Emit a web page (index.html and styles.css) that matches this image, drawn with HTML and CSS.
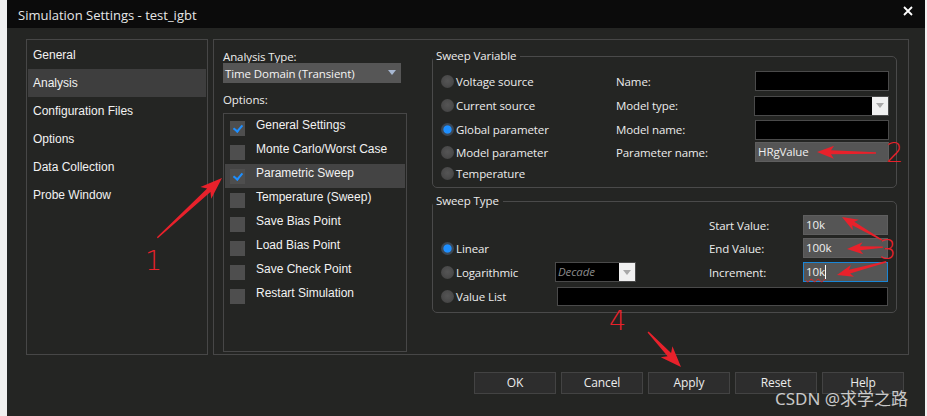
FILE: index.html
```html
<!DOCTYPE html>
<html>
<head>
<meta charset="utf-8">
<link rel="stylesheet" href="styles.css">
</head>
<body>
<div class="window">
  <div class="titlebar">
    <span class="title">Simulation Settings - test_igbt</span>
    <svg class="close" width="10" height="10" viewBox="0 0 10 10"><path d="M1 1L9 9M9 1L1 9" stroke="#fff" stroke-width="1.8"/></svg>
  </div>
  <div class="content">
    <div class="nav">
      <div class="nav-item">General</div>
      <div class="nav-item selected">Analysis</div>
      <div class="nav-item">Configuration Files</div>
      <div class="nav-item">Options</div>
      <div class="nav-item">Data Collection</div>
      <div class="nav-item">Probe Window</div>
    </div>
    <div class="main">
      <div class="left-col">
        <div class="lbl">Analysis Type:</div>
        <div class="combo-analysis"><span>Time Domain (Transient)</span><span class="tri blue"></span></div>
        <div class="lbl options-lbl">Options:</div>
        <div class="optlist">
          <div class="opt"><span class="cb checked"></span><span>General Settings</span></div>
          <div class="opt"><span class="cb"></span><span>Monte Carlo/Worst Case</span></div>
          <div class="opt hl"><span class="cb checked"></span><span>Parametric Sweep</span></div>
          <div class="opt"><span class="cb"></span><span>Temperature (Sweep)</span></div>
          <div class="opt"><span class="cb"></span><span>Save Bias Point</span></div>
          <div class="opt"><span class="cb"></span><span>Load Bias Point</span></div>
          <div class="opt"><span class="cb"></span><span>Save Check Point</span></div>
          <div class="opt"><span class="cb"></span><span>Restart Simulation</span></div>
        </div>
      </div>
      <div class="right-col">
        <fieldset class="group">
          <legend>Sweep Variable</legend>
          <div class="sv-grid">
            <div class="radio-row"><span class="radio"></span>Voltage source</div>
            <div class="flbl">Name:</div>
            <div class="field black"></div>

            <div class="radio-row"><span class="radio"></span>Current source</div>
            <div class="flbl">Model type:</div>
            <div class="field black combo"><span class="combo-btn"><span class="tri gray"></span></span></div>

            <div class="radio-row"><span class="radio on"></span>Global parameter</div>
            <div class="flbl">Model name:</div>
            <div class="field black"></div>

            <div class="radio-row"><span class="radio"></span>Model parameter</div>
            <div class="flbl">Parameter name:</div>
            <div class="field gray">HRgValue</div>

            <div class="radio-row"><span class="radio"></span>Temperature</div>
          </div>
        </fieldset>
        <fieldset class="group">
          <legend>Sweep Type</legend>
          <div class="st-grid">
            <div class="flbl st-start-l">Start Value:</div>
            <div class="field gray st-start">10k</div>

            <div class="radio-row st-lin"><span class="radio on"></span>Linear</div>
            <div class="flbl st-end-l">End Value:</div>
            <div class="field gray st-end">100k</div>

            <div class="radio-row st-log"><span class="radio"></span>Logarithmic</div>
            <div class="field black combo decade"><span class="decade-text">Decade</span><span class="combo-btn"><span class="tri gray"></span></span></div>
            <div class="flbl st-inc-l">Increment:</div>
            <div class="field gray focus st-inc"><span class="spell">10k</span><span class="caret"></span></div>

            <div class="radio-row st-vl"><span class="radio"></span>Value List</div>
            <div class="field black st-vlist"></div>
          </div>
        </fieldset>
      </div>
    </div>
  </div>
  <div class="buttons">
    <div class="btn">OK</div>
    <div class="btn">Cancel</div>
    <div class="btn">Apply</div>
    <div class="btn">Reset</div>
    <div class="btn">Help</div>
  </div>
</div>
<div class="watermark">CSDN @求学之路</div>
<svg class="annot" width="927" height="416" viewBox="0 0 927 416">
  <g fill="#e8212b">
    <g transform="translate(222,178) rotate(-42.7)"><polygon points="0,0 -22,-8 -18,-2.4 -88,-0.7 -88,0.7 -18,2.4 -22,8"/></g>
    <g transform="translate(817,152) rotate(181)"><polygon points="0,0 -17,-6.5 -14,-2 -59,-0.8 -59,0.8 -14,2 -17,6.5"/></g>
    <g transform="translate(842,217) rotate(-150)"><polygon points="0,0 -16,-6 -13,-2 -46,-0.7 -46,0.7 -13,2 -16,6"/></g>
    <g transform="translate(847,249) rotate(177)"><polygon points="0,0 -16,-6 -13,-2 -36,-0.7 -36,0.7 -13,2 -16,6"/></g>
    <g transform="translate(837,275) rotate(165)"><polygon points="0,0 -16,-6 -13,-2 -51,-0.7 -51,0.7 -13,2 -16,6"/></g>
    <g transform="translate(681,367) rotate(46.7)"><polygon points="0,0 -21,-8 -17,-2.4 -48,-0.7 -48,0.7 -17,2.4 -21,8"/></g>
  </g>
  <g class="num" fill="#e8212b">
    <text x="145" y="270">1</text>
    <text x="886" y="162">2</text>
    <text x="879" y="259">3</text>
    <text x="609" y="330">4</text>
  </g>
</svg>
</body>
</html>
```

FILE: styles.css
```css
* { box-sizing: border-box; }
html, body { margin: 0; padding: 0; }
body {
  background: #f0f0f0;
  width: 927px;
  height: 416px;
  overflow: hidden;
  position: relative;
  font-family: "Open Sans", "Liberation Sans", sans-serif;
  font-size: 11.5px;
  letter-spacing: -0.1px;
  color: #ececec;
}
.window {
  margin-left: 7px;
  width: 918px;
  height: 416px;
  background: #242523;
  display: flex;
  flex-direction: column;
}
.titlebar {
  height: 28px;
  background: #0b0b0b;
  display: flex;
  align-items: center;
  justify-content: space-between;
  padding: 2px 12px 0 11px;
  flex: none;
}
.titlebar .title { font-size: 13px; color: #e6e6e6; letter-spacing: 0; }
.titlebar .close { margin-top: -8px; }
.content {
  display: flex;
  gap: 5px;
  padding: 11px 0 0 19px;
  flex: none;
}
.nav {
  width: 182px;
  height: 316px;
  border: 1px solid #474747;
  padding: 1px 1px 0 1px;
  font-family: "Liberation Sans", Arial, sans-serif;
  font-size: 12px;
  letter-spacing: 0;
  color: #f2f2f2;
}
.nav-item {
  height: 28px;
  line-height: 28px;
  padding-left: 5px;
}
.nav-item.selected { background: #3e3e3e; }
.main {
  width: 696px;
  height: 316px;
  border: 1px solid #474747;
  display: flex;
  padding: 10px 11px 0 9px;
  gap: 25px;
}
.left-col { width: 184px; display: flex; flex-direction: column; }
.lbl { line-height: 13px; height: 13px; }
.combo-analysis {
  height: 20px;
  width: 178px;
  background: #565656;
  display: flex;
  align-items: center;
  justify-content: space-between;
  padding: 0 5px 0 2px;
  color: #f4f4f4;
}
.tri {
  width: 0; height: 0;
  border-left: 4px solid transparent;
  border-right: 4px solid transparent;
  border-top: 5px solid #a0a0a0;
}
.tri.blue { border-top-color: #a8b8d2; margin-top: -2px; }
.options-lbl { margin-top: 10px; height: 20px; line-height: 14px; }
.optlist {
  height: 239px;
  border: 1px solid #474747;
  padding: 2px 1px 0 1px;
  font-family: "Liberation Sans", Arial, sans-serif;
  font-size: 12px;
  letter-spacing: 0;
  color: #f2f2f2;
}
.opt {
  height: 24px;
  display: flex;
  align-items: flex-start;
  padding-left: 5px;
  gap: 11px;
}
.opt span:last-child { line-height: 18px; }
.opt.hl { background: #444444; }
.cb {
  width: 15px; height: 15px;
  margin-top: 5px;
  background: #4e4e4e;
  position: relative;
  flex: none;
}
.cb.checked::after {
  content: "";
  position: absolute;
  left: 5px; top: 2px;
  width: 4px; height: 7px;
  border-right: 2px solid #1e8fff;
  border-bottom: 2px solid #1e8fff;
  transform: rotate(40deg);
}
.right-col { width: 465px; display: flex; flex-direction: column; gap: 6px; margin-top: -1px; }
.group {
  margin: 0;
  padding: 0 0 4px 0;
  border: 1px solid #4a4a4a;
  border-radius: 5px;
  min-width: 0;
}
.group legend {
  padding: 0 4px 0 3px;
  margin-left: 0;
  line-height: 14px;
  color: #ececec;
}
.sv-grid {
  display: grid;
  grid-template-columns: 175px 139px 134px;
  grid-template-rows: 24px 25px 23px 22px 20px;
  margin-top: 6px;
  padding-left: 8px;
  align-items: center;
}
.radio-row { display: flex; align-items: center; gap: 2px; white-space: nowrap; }
.radio {
  width: 13px; height: 13px;
  border-radius: 50%;
  background: radial-gradient(circle at 50% 45%, #555 0, #4a4a4a 55%, #3c3c3c 100%);
  flex: none;
}
.radio.on {
  background: radial-gradient(circle, #1e8fff 0, #1e8fff 3.6px, #3a4a5c 4.6px, #3e3e3e 100%);
}
.flbl { white-space: nowrap; }
.field {
  height: 20px;
  border: 1px solid #4a4a4a;
  padding: 0 2px;
  line-height: 18px;
  color: #f0f0f0;
}
.field.black { background: #000; }
.field.gray { background: #555555; border-color: #5e5e5e; }
.field.focus { border-color: #1a86d6; }
.combo { display: flex; justify-content: space-between; padding: 0; }
.combo-btn {
  width: 16px;
  height: 100%;
  margin-left: auto;
  background: #f0f0f0;
  display: flex;
  align-items: center;
  justify-content: center;
}
.tri.gray { border-top-color: #a8a8a8; }
.sv-grid .combo { margin-left: -1px; }
.st-grid {
  display: grid;
  grid-template-columns: 114px 154px 94px 85px;
  grid-template-rows: 22px 24px 24px 24px;
  margin-top: 6px;
  padding-left: 8px;
  align-items: center;
}
.st-start-l { grid-column: 3; grid-row: 1; }
.st-start { grid-column: 4; grid-row: 1; }
.st-lin { grid-column: 1; grid-row: 2; }
.st-end-l { grid-column: 3; grid-row: 2; }
.st-end { grid-column: 4; grid-row: 2; }
.st-log { grid-column: 1; grid-row: 3; }
.decade { grid-column: 2; grid-row: 3; width: 81px; }
.st-inc-l { grid-column: 3; grid-row: 3; }
.st-inc { grid-column: 4; grid-row: 3; display: flex; align-items: center; }
.st-vl { grid-column: 1; grid-row: 4; }
.st-vlist { grid-column: 2 / 5; grid-row: 4; margin-left: 2px; height: 19px; }
.decade-text { font-style: italic; color: #8a8a8a; line-height: 18px; padding-left: 2px; }
.spell { text-decoration: underline wavy #e02020; text-decoration-thickness: 1px; text-underline-offset: 2px; }
.caret { width: 1px; height: 14px; background: #fff; }
.buttons {
  display: flex;
  justify-content: flex-end;
  gap: 5px;
  padding-right: 21px;
  margin-top: 17px;
}
.btn {
  width: 82px;
  height: 22px;
  border: 1px solid #434343;
  background: #2d2d2d;
  text-align: center;
  line-height: 20px;
  color: #ececec;
  font-size: 12px;
}
.watermark {
  position: absolute;
  left: 775px;
  top: 385px;
  font-family: "Noto Sans", "Noto Sans CJK SC", sans-serif;
  font-size: 17px;
  letter-spacing: 0;
  color: rgba(230, 230, 230, 0.85);
  white-space: nowrap;
}
.annot { position: absolute; left: 0; top: 0; pointer-events: none; }
.num text { font-family: "DejaVu Sans", sans-serif; font-size: 27px; font-weight: 300; }
```
